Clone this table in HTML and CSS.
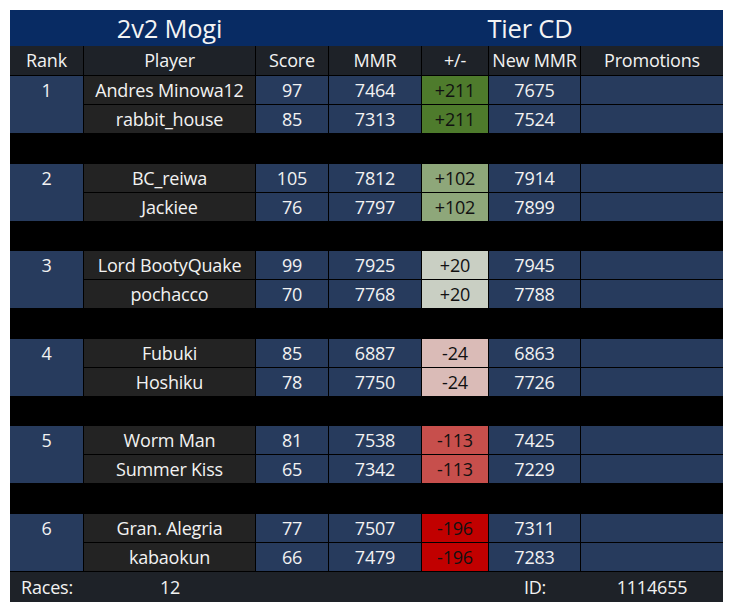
FILE: index.html
```html
<!DOCTYPE html>
<html>
<head>
<meta charset="utf-8">
<link rel="stylesheet" href="styles.css">
</head>
<body>
<div class="board">
  <div class="title">
    <div class="title-left">2v2 Mogi</div>
    <div class="title-right">Tier CD</div>
  </div>
  <div class="grid">
    <div class="hd">Rank</div><div class="hd">Player</div><div class="hd">Score</div><div class="hd">MMR</div><div class="hd">+/-</div><div class="hd">New MMR</div><div class="hd">Promotions</div>

    <div class="rank">1</div>
    <div class="player">Andres Minowa12</div><div class="cell">97</div><div class="cell">7464</div><div class="delta d1">+211</div><div class="cell">7675</div><div class="cell"></div>
    <div class="player">rabbit_house</div><div class="cell">85</div><div class="cell">7313</div><div class="delta d1">+211</div><div class="cell">7524</div><div class="cell"></div>
    <div class="spacer"></div>

    <div class="rank">2</div>
    <div class="player">BC_reiwa</div><div class="cell">105</div><div class="cell">7812</div><div class="delta d2">+102</div><div class="cell">7914</div><div class="cell"></div>
    <div class="player">Jackiee</div><div class="cell">76</div><div class="cell">7797</div><div class="delta d2">+102</div><div class="cell">7899</div><div class="cell"></div>
    <div class="spacer"></div>

    <div class="rank">3</div>
    <div class="player">Lord BootyQuake</div><div class="cell">99</div><div class="cell">7925</div><div class="delta d3">+20</div><div class="cell">7945</div><div class="cell"></div>
    <div class="player">pochacco</div><div class="cell">70</div><div class="cell">7768</div><div class="delta d3">+20</div><div class="cell">7788</div><div class="cell"></div>
    <div class="spacer"></div>

    <div class="rank">4</div>
    <div class="player">Fubuki</div><div class="cell">85</div><div class="cell">6887</div><div class="delta d4">-24</div><div class="cell">6863</div><div class="cell"></div>
    <div class="player">Hoshiku</div><div class="cell">78</div><div class="cell">7750</div><div class="delta d4">-24</div><div class="cell">7726</div><div class="cell"></div>
    <div class="spacer"></div>

    <div class="rank">5</div>
    <div class="player">Worm Man</div><div class="cell">81</div><div class="cell">7538</div><div class="delta d5">-113</div><div class="cell">7425</div><div class="cell"></div>
    <div class="player">Summer Kiss</div><div class="cell">65</div><div class="cell">7342</div><div class="delta d5">-113</div><div class="cell">7229</div><div class="cell"></div>
    <div class="spacer"></div>

    <div class="rank">6</div>
    <div class="player">Gran. Alegria</div><div class="cell">77</div><div class="cell">7507</div><div class="delta d6">-196</div><div class="cell">7311</div><div class="cell"></div>
    <div class="player">kabaokun</div><div class="cell">66</div><div class="cell">7479</div><div class="delta d6">-196</div><div class="cell">7283</div><div class="cell"></div>
  </div>
  <div class="footer">
    <div>Races:</div><div>12</div><div></div><div></div><div></div><div>ID:</div><div>1114655</div>
  </div>
</div>
</body>
</html>
```

FILE: styles.css
```css
html, body {
  margin: 0;
  padding: 0;
  background: #ffffff;
}
body {
  padding: 10px;
  font-family: "Open Sans", "Noto Sans", sans-serif;
  color: #f2f2f2;
}
.board {
  width: 713px;
  background: #000;
}
.title {
  display: grid;
  grid-template-columns: 319px 1fr;
  height: 36px;
  background: #082b63;
  font-size: 25.5px;
  line-height: 36px;
  letter-spacing: -0.2px;
  color: #f4f4f4;
  text-align: center;
}
.title-right {
  padding-left: 8px;
}
.grid {
  display: grid;
  grid-template-columns: 73px 171px 72px 92px 66px 91px 142px;
  grid-template-rows: 29px repeat(17, 28.18px);
  gap: 1px;
  background: #000;
  padding-bottom: 1px;
  font-size: 18px;
  letter-spacing: -0.2px;
}
.grid > div {
  text-align: center;
  line-height: 28px;
  white-space: nowrap;
  overflow: hidden;
}
.hd {
  background: #1e2228;
  line-height: 29px !important;
}
.rank {
  grid-row: span 2;
  background: #273b5d;
}
.player {
  background: #232323;
}
.cell {
  background: #273b5d;
}
.spacer {
  grid-column: 1 / -1;
  background: #000;
}
.delta { color: #111; }
.d1 { background: #4e7b2c; }
.d2 { background: #8ea77a; }
.d3 { background: #c9cfc3; }
.d4 { background: #dabbb7; }
.d5 { background: #c74f4c; }
.d6 { background: #c10000; }
.footer {
  display: grid;
  grid-template-columns: 74px 172px 73px 93px 67px 92px 142px;
  height: 30px;
  background: #1e2228;
  font-size: 18px;
  letter-spacing: -0.2px;
  line-height: 30px;
  text-align: center;
}
```
